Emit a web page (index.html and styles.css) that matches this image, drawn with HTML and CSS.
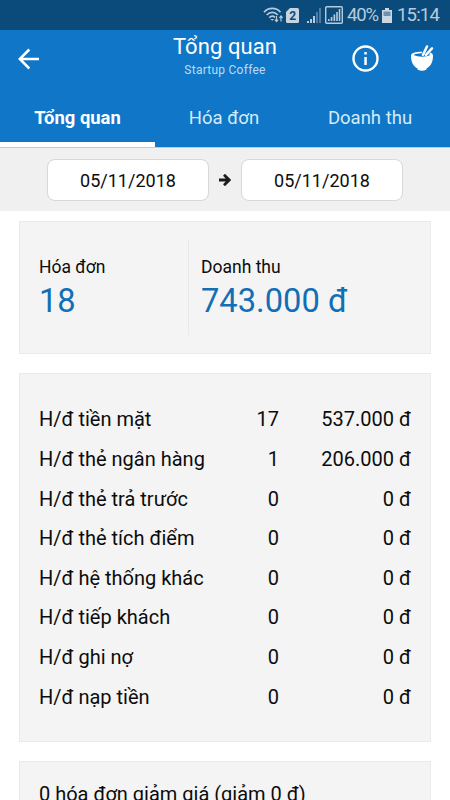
FILE: index.html
```html
<!DOCTYPE html>
<html lang="vi">
<head>
    <meta charset="UTF-8">
    <meta name="viewport" content="width=device-width, initial-scale=1.0">
    <title>Tổng quan</title>
    <link rel="stylesheet" href="styles.css">
</head>
<body>
    <div class="status-bar">
        <svg class="wifi" width="21" height="18" viewBox="0 0 21 18" fill="none" stroke="#b7cbdc" stroke-width="1.7">
            <path d="M1 6.2C5.500 1.200 13 1.200 17.500 6.200M3.700 9C7 5.500 11.500 5.500 14.800 9M6.300 11.700C8.300 9.800 10.300 9.800 12 11.400"/>
            <path d="M9.200 14.800L7.300 12.900H11.100Z" fill="#b7cbdc" stroke="none"/>
            <path d="M13.500 10v5.500M11.900 13.700l1.600 1.800 1.600-1.800M18 15.500V10M16.400 11.800L18 10l1.600 1.800" stroke-width="1.2"/>
        </svg>
        <svg class="sim" width="13" height="15" viewBox="0 0 13 15">
            <path d="M4 0H11.500Q13 0 13 1.500V13.500Q13 15 11.500 15H1.500Q0 15 0 13.500V4Z" fill="#c5d4e1"/>
            <text x="6.700" y="11.700" text-anchor="middle" class="sim-text">2</text>
        </svg>
        <svg class="signal" width="14" height="15" viewBox="0 0 14 15">
            <path d="M0 13h2v2H0zM3 11h2v4H3zM6 8h2v7H6z" fill="#b7cbdc"/>
            <path d="M9 4h2v11H9zM12 0h2v15h-2z" fill="#527da0"/>
        </svg>
        <svg class="signal-box" width="18" height="18" viewBox="0 0 18 18">
            <rect x=".7" y=".7" width="16.600" height="16.600" rx="1" fill="none" stroke="#b7cbdc" stroke-width="1.400"/>
            <path d="M3 13h1.500v2H3zM5.700 11h1.700v4H5.700zM8.500 8.500h1.700V15H8.500zM11.200 6h1.600v9h-1.600zM13.800 3h1.500v12h-1.500z" fill="#b7cbdc"/>
        </svg>
        <span class="percent">40%</span>
        <svg class="battery" width="10" height="15" viewBox="0 0 10 15">
            <path d="M3 0h4v2h3v13H0V2h3z" fill="#cbd8e3"/>
            <path d="M1.500 3.500h7V8h-7z" fill="#6f91ad"/>
        </svg>
        <span class="clock">15:14</span>
    </div>

    <header class="header">
        <svg class="back" width="22" height="22" viewBox="0 0 22 22" fill="none" stroke="#fff" stroke-width="2.500">
            <path d="M21 11H2M11.300 1.500L1.800 11l9.500 9.500"/>
        </svg>
        <div class="heading">
            <h1 class="title">Tổng quan</h1>
            <div class="subtitle">Startup Coffee</div>
        </div>
        <div class="actions">
            <svg width="27" height="27" viewBox="0 0 27 27">
                <circle cx="13.500" cy="13.500" r="12" fill="none" stroke="#fff" stroke-width="2.400"/>
                <path d="M12.300 7h2.500v2.600h-2.500zM12.300 12h2.500v8h-2.500z" fill="#fff"/>
            </svg>
            <svg width="24" height="28" viewBox="0 0 24 28">
                <path d="M1 10.500C1 8 5 6.700 12.500 6.700L11.500 8.300Q6 8.400 3.500 10Q7 11.800 12 11.800T20.500 10L19 9.200 20.500 7.500Q23 8.600 23 10.500C23 17 21 21 16.500 23.500V24.500Q12 27 7.500 24.500V23.500C3 21 1 17 1 10.500Z" fill="#fff"/>
                <path d="M13 9.800L17 1.500M16 9.800L22 3.300" fill="none" stroke="#fff" stroke-width="2.500" stroke-linecap="round"/>
            </svg>
        </div>
    </header>

    <nav class="tabs">
        <div class="tab active">Tổng quan</div>
        <div class="tab">Hóa đơn</div>
        <div class="tab">Doanh thu</div>
    </nav>

    <div class="dates">
        <div class="date">05/11/2018</div>
        <svg width="12" height="12" viewBox="0 0 12 12" fill="none" stroke="#1c1c1c" stroke-width="2.800">
            <path d="M0 6h10M5 .8L10.200 6 5 11.200"/>
        </svg>
        <div class="date">05/11/2018</div>
    </div>

    <main class="content">
        <section class="card summary">
            <div class="stat">
                <div class="label">Hóa đơn</div>
                <div class="value">18</div>
            </div>
            <div class="stat revenue">
                <div class="label">Doanh thu</div>
                <div class="value">743.000 đ</div>
            </div>
        </section>

        <section class="card list">
            <div class="row"><span>H/đ tiền mặt</span><span class="num">17</span><span class="num">537.000 đ</span></div>
            <div class="row"><span>H/đ thẻ ngân hàng</span><span class="num">1</span><span class="num">206.000 đ</span></div>
            <div class="row"><span>H/đ thẻ trả trước</span><span class="num">0</span><span class="num">0 đ</span></div>
            <div class="row"><span>H/đ thẻ tích điểm</span><span class="num">0</span><span class="num">0 đ</span></div>
            <div class="row"><span>H/đ hệ thống khác</span><span class="num">0</span><span class="num">0 đ</span></div>
            <div class="row"><span>H/đ tiếp khách</span><span class="num">0</span><span class="num">0 đ</span></div>
            <div class="row"><span>H/đ ghi nợ</span><span class="num">0</span><span class="num">0 đ</span></div>
            <div class="row"><span>H/đ nạp tiền</span><span class="num">0</span><span class="num">0 đ</span></div>
        </section>

        <section class="card discount">0 hóa đơn giảm giá (giảm 0 đ)</section>
    </main>
</body>
</html>
```

FILE: styles.css
```css
* {
    box-sizing: border-box;
}
body {
    margin: 0;
    height: 800px;
    overflow: hidden;
    background: #fff;
    color: #0c0c0c;
    font-family: Roboto, "Noto Sans", sans-serif;
}
svg {
    display: block;
    flex: none;
}
.status-bar {
    display: flex;
    align-items: center;
    height: 30px;
    padding-left: 263px;
    background: #0b4b7c;
    color: #b7cbdc;
    font-size: 18.5px;
    white-space: nowrap;
}
.sim {
    margin-left: 2px;
}
.sim-text {
    font-size: 12px;
    font-weight: 700;
    fill: #0b4b7c;
}
.signal {
    margin-left: 8px;
}
.signal-box {
    margin-left: 4px;
}
.percent {
    width: 30px;
    margin-left: 4px;
    letter-spacing: -1.2px;
}
.battery {
    margin-left: 5px;
}
.clock {
    margin-left: 5px;
    letter-spacing: -0.8px;
}
.header {
    display: grid;
    grid-template-columns: 86px 1fr 86px;
    align-items: center;
    height: 57px;
    padding: 0 16px 0 18px;
    background: #1076c7;
    color: #fff;
}
.heading {
    padding: 0 2px 5px 0;
    text-align: center;
}
.title {
    margin: 0;
    font-size: 22px;
    font-weight: 400;
    line-height: 26px;
    letter-spacing: 0.1px;
}
.subtitle {
    margin-top: 2px;
    color: #b9dcf6;
    font-size: 12px;
    line-height: 16px;
    letter-spacing: 0.25px;
}
.actions {
    display: flex;
    align-items: center;
    justify-content: flex-end;
    gap: 31px;
}
.tabs {
    display: grid;
    grid-template-columns: 155px 138px 154px;
    height: 61px;
    background: #1076c7;
    border-bottom: 1px solid #b4d0e6;
    color: #d5ebfa;
    font-size: 18.5px;
    line-height: 62px;
    text-align: center;
}
.tab {
    height: 60px;
}
.active {
    border-bottom: 5px solid #fff;
    color: #fff;
    font-size: 18.4px;
    font-weight: 700;
}
.dates {
    display: flex;
    align-items: center;
    justify-content: center;
    gap: 10px;
    height: 63px;
    padding-top: 1px;
    background: #f0f0f0;
}
.date {
    width: 162px;
    height: 42px;
    border: 1px solid #d8d8d8;
    border-radius: 8px;
    background: #fff;
    font-size: 18px;
    line-height: 42px;
    text-align: center;
}
.content {
    padding: 10px 19px 0;
}
.card {
    margin-bottom: 19px;
    border: 1px solid #eaeaea;
    background: #f4f4f4;
}
.card:last-child {
    margin-bottom: 0;
}
.summary {
    display: flex;
    height: 133px;
    padding: 18px 19px;
}
.stat {
    width: 149px;
    height: 95px;
    padding-top: 16px;
}
.revenue {
    flex: 1;
    padding-left: 12px;
    border-left: 1px solid #e9e9e9;
}
.label {
    font-size: 17.5px;
    line-height: 22px;
}
.value {
    margin-top: 3px;
    color: #126fb5;
    font-size: 32.7px;
    line-height: 40px;
}
.list {
    height: 369px;
    padding: 25.600px 19px 0;
    font-size: 20px;
}
.row {
    display: grid;
    grid-template-columns: 180px 60px 1fr;
    align-items: center;
    height: 39.6px;
    white-space: nowrap;
}
.num {
    text-align: right;
}
.discount {
    height: 39px;
    padding: 19px 19px 0;
    border-bottom: 0;
    font-size: 20px;
    line-height: 26px;
}
```
